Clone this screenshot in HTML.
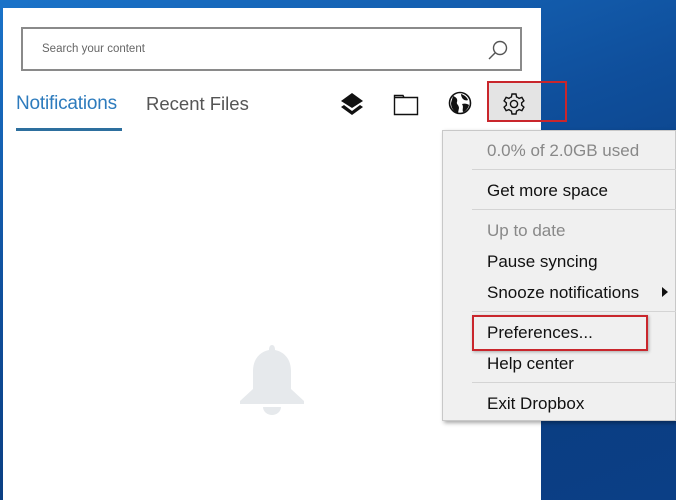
<!DOCTYPE html>
<html><head><style>
*{margin:0;padding:0;box-sizing:border-box}
body{width:676px;height:500px;overflow:hidden;position:relative;font-family:"Liberation Sans",sans-serif;
background:linear-gradient(160deg,#1a73c9 0%,#0f4f9c 40%,#0a3d80 70%,#0b3f86 100%)}
.abs{position:absolute}
#panel{left:3px;top:8px;width:538px;height:492px;background:#fff}
.mi{position:absolute;left:487px;font-size:17px;color:#111;white-space:nowrap}
.sep{position:absolute;left:472px;width:204px;height:1px;background:#d4d4d4}
</style></head><body>
<div id="panel" class="abs"></div>
<div class="abs" style="left:21px;top:27px;width:501px;height:44px;border:2px solid #8a8a8a;background:#fff"></div>
<div class="abs" style="left:42px;top:43px;font-size:11.5px;color:#666">Search your content</div>
<svg class="abs" style="left:486px;top:38px" width="24" height="24" viewBox="0 0 24 24"><circle cx="14" cy="10" r="6.5" fill="none" stroke="#555" stroke-width="1.4"/><line x1="9.5" y1="14.5" x2="3" y2="21" stroke="#555" stroke-width="1.4"/></svg>
<div class="abs" style="left:16px;top:93px;font-size:19px;color:#2d7bbd;letter-spacing:-0.2px">Notifications</div>
<div class="abs" style="left:16px;top:128px;width:106px;height:3px;background:#2d6f9e"></div>
<div class="abs" style="left:146px;top:93px;font-size:18.5px;color:#555">Recent Files</div>
<svg class="abs" style="left:339px;top:92px" width="26" height="24" viewBox="0 0 26 24"><path d="M13 1L24 9L13 16L2 9Z" fill="#111"/><path d="M5 13L2 15L13 23L24 15L21 13L13 19Z" fill="#111"/></svg>
<svg class="abs" style="left:393px;top:92px" width="26" height="24" viewBox="0 0 26 24"><path d="M1.5 3.5H10L11 5.5H24.5V22.5H1.5Z M1.5 5.5H11" fill="none" stroke="#111" stroke-width="1.4"/></svg>
<svg class="abs" style="left:448px;top:91px" width="24" height="24" viewBox="0 0 24 24"><circle cx="12" cy="12" r="10.5" fill="#fff" stroke="#111" stroke-width="1.6"/><path d="M5 5C8 6 10 8 9 11C8 13 11 14 11 17L10 22C6 21 3 17 3 12Z M13 3C16 4 19 6 20 9C18 10 16 9 15 8C14 7 13 5 13 3Z M14 13C17 12 20 13 21 14C20 18 17 21 15 21C14 18 16 16 14 13Z" fill="#111"/></svg>
<div class="abs" style="left:488px;top:82px;width:53px;height:40px;background:#e4e4e4"></div>
<svg class="abs" style="left:502px;top:92px" width="24" height="24" viewBox="0 0 24 24"><path d="M10 2H14L14.6 5A7 7 0 0 1 17 6.4L19.9 5.4L21.9 8.9L19.6 10.9A7 7 0 0 1 19.6 13.1L21.9 15.1L19.9 18.6L17 17.6A7 7 0 0 1 14.6 19L14 22H10L9.4 19A7 7 0 0 1 7 17.6L4.1 18.6L2.1 15.1L4.4 13.1A7 7 0 0 1 4.4 10.9L2.1 8.9L4.1 5.4L7 6.4A7 7 0 0 1 9.4 5Z" fill="none" stroke="#111" stroke-width="1.4"/><circle cx="12" cy="12" r="3.6" fill="none" stroke="#111" stroke-width="1.4"/></svg>
<div class="abs" style="left:487px;top:81px;width:80px;height:41px;border:2px solid #c9262c"></div>
<div class="abs" style="left:442px;top:130px;width:234px;height:291px;background:#f0f0f0;border:1px solid #c8c8c8;box-shadow:2px 2px 4px rgba(0,0,0,.35)"></div>
<div class="mi" style="top:141px;color:#888">0.0% of 2.0GB used</div>
<div class="sep" style="top:169px"></div>
<div class="mi" style="top:181px">Get more space</div>
<div class="sep" style="top:209px"></div>
<div class="mi" style="top:221px;color:#888">Up to date</div>
<div class="mi" style="top:252px">Pause syncing</div>
<div class="mi" style="top:283px">Snooze notifications</div>
<svg class="abs" style="left:662px;top:287px" width="6" height="10"><path d="M0 0L6 5L0 10Z" fill="#111"/></svg>
<div class="sep" style="top:311px"></div>
<div class="mi" style="top:323px">Preferences...</div>
<div class="abs" style="left:472px;top:315px;width:176px;height:36px;border:2px solid #c9262c;box-shadow:1px 1px 3px rgba(0,0,0,.3)"></div>
<div class="mi" style="top:354px">Help center</div>
<div class="sep" style="top:382px"></div>
<div class="mi" style="top:394px">Exit Dropbox</div>
<svg class="abs" style="left:237px;top:343px" width="70" height="74" viewBox="0 0 70 74"><path d="M35 2C33 2 32 4 32 7C22 9 16 17 16 28V46L3 58V61H67V58L54 46V28C54 17 48 9 38 7C38 4 37 2 35 2Z" fill="#e6e9ec"/><path d="M26 64A9 8 0 0 0 44 64Z" fill="#e6e9ec"/></svg>
</body></html>
